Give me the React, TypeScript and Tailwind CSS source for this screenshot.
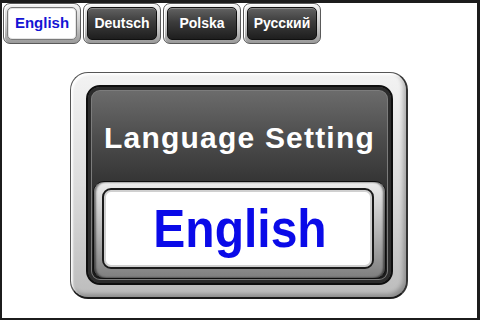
import React from "react";

type TTab = {
  id: number;
  label: string;
  active?: boolean;
};

const tabs: TTab[] = [
  { id: 1, label: "English", active: true },
  { id: 2, label: "Deutsch" },
  { id: 3, label: "Polska" },
  { id: 4, label: "Русский" },
];

const font = { fontFamily: '"Liberation Sans", Arial, sans-serif' };

const Tab = ({ tab }: { tab: TTab }) => (
  <div className="w-[78px] h-[41px] rounded-[7px] border border-[#5a5a5a] p-[3px] bg-[linear-gradient(to_bottom,#f4f4f4,#c9c9c9_55%,#9a9a9a)] shadow-[inset_1px_1px_0_#fff]">
    {tab.active ? (
      <div className="h-full rounded-[5px] border border-[#7a7a7a] bg-white flex items-center justify-center shadow-[inset_0_0_0_1px_#e4e4e4]">
        <span className="text-[15px] font-bold text-[#1414d4]">{tab.label}</span>
      </div>
    ) : (
      <div className="h-full rounded-[5px] border border-[#111] bg-[linear-gradient(to_bottom,#626262,#3c3c3c_45%,#1e1e1e)] flex items-center justify-center shadow-[inset_0_1px_0_#8a8a8a]">
        <span className="text-[14px] font-bold text-white">{tab.label}</span>
      </div>
    )}
  </div>
);

const App = () => {
  return (
    <div
      style={font}
      className="w-[480px] h-[320px] box-border bg-white border-[#1c1c1c] border-t-[3px] border-l-2 border-r-[3px] border-b-2 flex flex-col"
    >
      <div className="flex gap-[2px] pl-[1px]">
        {tabs.map((tab) => (
          <Tab key={tab.id} tab={tab} />
        ))}
      </div>

      <div className="mt-[28px] ml-[68px] w-[338px] h-[227px] rounded-[18px] border border-[#555] border-b-2 border-b-[#1a1a1a] border-r-2 border-r-[#333] bg-[linear-gradient(to_bottom,#f3f3f3,#dcdcdc_50%,#bcbcbc)] shadow-[inset_2px_2px_2px_rgba(255,255,255,0.9),inset_-3px_-3px_4px_rgba(0,0,0,0.25)] pl-[15px] pt-[12px] pr-[13px] pb-[12px] flex">
        <div className="flex-1 rounded-[14px] border-2 border-[#0f0f0f] bg-[linear-gradient(to_bottom,#6e6e6e,#4e4e4e_25%,#333_50%,#1a1a1a)] shadow-[inset_0_0_0_3px_#2c2c2c,inset_0_0_0_4px_#7c7c7c] flex flex-col">
          <div className="h-[94px] flex items-center justify-center pt-[6px]">
            <span className="text-[30px] font-bold text-white tracking-[1.2px]">
              Language Setting
            </span>
          </div>
          <div className="ml-[5px] mr-[5px] h-[98px] rounded-[11px] border border-[#0d0d0d] bg-[linear-gradient(to_bottom,#ececec,#b8b8b8_50%,#7e7e7e)] shadow-[inset_2px_0_2px_rgba(0,0,0,0.5),inset_-2px_0_2px_rgba(0,0,0,0.5)] pl-[8px] pt-[6px] pr-[11px] pb-[9px] flex">
            <div className="flex-1 rounded-[9px] border-2 border-[#1a1a1a] bg-white shadow-[inset_0_0_0_2px_#d0d0d0] flex items-center justify-center">
              <span className="text-[48px] font-bold text-[#0a0ae8] leading-none scale-y-[1.12] ml-[4px]">
                English
              </span>
            </div>
          </div>
        </div>
      </div>
    </div>
  );
};

export default App;
